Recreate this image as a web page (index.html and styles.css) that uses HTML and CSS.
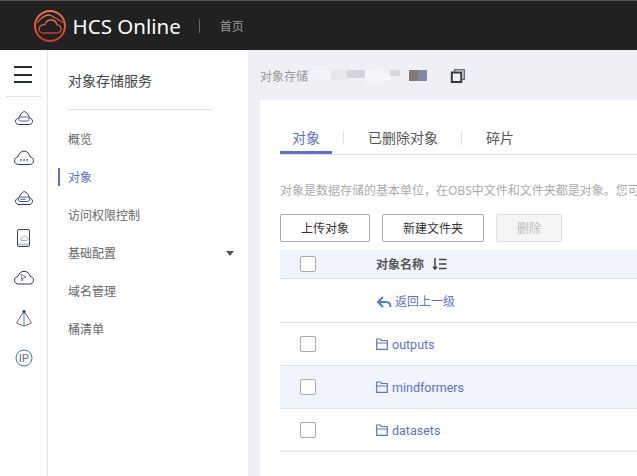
FILE: index.html
```html
<!DOCTYPE html>
<html lang="zh-CN">
<head>
    <meta charset="UTF-8" />
    <title>HCS Online</title>
    <link rel="stylesheet" href="styles.css">
</head>
<body>
    <header class="topbar">
        <svg class="logo" width="32" height="32" viewBox="0 0 32 32" fill="none" stroke="url(#logoFade)" stroke-width="1.300">
            <defs><linearGradient id="logoFade" x1="0" y1="0" x2="0" y2="1"><stop offset="0" stop-color="#e8784a" /><stop offset="1" stop-color="#d23a2a" /></linearGradient></defs>
            <circle cx="16" cy="16" r="15" stroke-width="2" />
            <path d="M9 23h13.500c2.800 0 4.500-1.800 4.500-4 0-2.300-1.700-4-4-4.200C22.300 12 19.800 10 17 10c-3 0-5.300 2-6 4.700C7.500 14.500 5 16.500 5 19c0 2.300 1.800 4 4 4z" />
            <path d="M3 13C7 8 12 3.500 17 5.500L30 13" />
        </svg>
        <span class="brand">HCS Online</span>
        <span class="topbar-sep"></span>
        <span class="home">首页</span>
    </header>
    <div class="layout">
        <nav class="rail">
            <div class="burger"><i></i><i></i><i></i></div>
            <ul class="rail-icons">
                <li><svg width="20" height="20" viewBox="0 0 20 20" fill="none" stroke="#2c3550"><path d="M5 16.500h10c2.200 0 3.500-1.400 3.500-3.200 0-1.700-1.200-3-2.900-3.200C15 8 13 3.700 10.300 3.700 7.800 3.700 5.800 7.800 5 10 3 10.200 1.500 11.500 1.500 13.300c0 1.800 1.500 3.200 3.500 3.200z" /><rect x="5" y="9" width="10" height="4" rx="1.500" stroke="#4a6aa8" /></svg></li>
                <li><svg width="22" height="20" viewBox="0 0 22 20" fill="none" stroke="#2c3550"><path d="M5.500 16.500h11c2.500 0 4-1.700 4-3.800 0-2-1.500-3.600-3.400-3.800C16.500 6 14.300 3 11 3 8 3 5.800 5.800 5 8.800 3 9.200 1.500 10.800 1.500 12.800c0 2 1.700 3.700 4 3.700z" /><path d="M7 12h1.500M10.300 12h1.500M13.500 12H15" stroke="#3d4a6b" stroke-width="1.500" /></svg></li>
                <li><svg width="20" height="20" viewBox="0 0 20 20" fill="none" stroke="#2c3550"><path d="M5 16.500h10c2.200 0 3.500-1.400 3.500-3.200 0-1.700-1.200-3-2.900-3.200C15 8 13 3.700 10.300 3.700 7.800 3.700 5.800 7.800 5 10 3 10.200 1.500 11.500 1.500 13.300c0 1.800 1.500 3.200 3.500 3.200z" /><rect x="4.500" y="9" width="11" height="4.500" rx="1.500" stroke="#4a6aa8" /><path d="M6.500 11.200h5" stroke="#3d4a6b" /></svg></li>
                <li><svg width="20" height="20" viewBox="0 0 20 20" fill="none"><rect x="3.500" y="1.500" width="12" height="17" rx="1.500" stroke="#3e4660" /><path d="M7.500 12.500h5c1 0 1.500-.7 1.500-1.400s-.6-1.300-1.300-1.400c-.3-1-1.200-1.700-2.200-1.700s-2 .7-2.300 1.700c-.8.100-1.400.7-1.400 1.400s.5 1.400 1.200 1.400z" stroke="#a5adbd" /><path d="M4 16.500h11" stroke="#bfc2c9" stroke-width="2" /></svg></li>
                <li><svg width="22" height="20" viewBox="0 0 22 20" fill="none" stroke="#2c3550"><path d="M5.500 16h11c2.500 0 4-1.700 4-3.800 0-2-1.500-3.600-3.400-3.800C16.500 5.500 14.300 3.300 11 3.300 8 3.300 5.800 5.300 5 8.300 3 8.700 1.500 10.300 1.500 12.300c0 2 1.700 3.700 4 3.700z" /><path d="M8 6l5 3-3 1-1 3z" stroke="#6a7488" stroke-width=".9" /></svg></li>
                <li><svg width="20" height="20" viewBox="0 0 20 20" fill="none"><path d="M10 3L2.500 15l7.500 3 7.500-3z" stroke="#7a6a68" /><path d="M10 3v15" stroke="#4a80c8" /><circle cx="10" cy="3.500" r="1.500" fill="#2c3550" /></svg></li>
                <li><svg width="20" height="20" viewBox="0 0 20 20" fill="none"><circle cx="10" cy="10" r="8" stroke="#4a70b8" /><text class="ip" x="10" y="14" text-anchor="middle">IP</text></svg></li>
            </ul>
        </nav>
        <aside class="side">
            <h2 class="side-title">对象存储服务</h2>
            <ul class="side-menu">
                <li>概览</li>
                <li class="active">对象</li>
                <li>访问权限控制</li>
                <li class="has-sub">基础配置</li>
                <li>域名管理</li>
                <li>桶清单</li>
            </ul>
        </aside>
        <main class="main">
            <div class="crumb">
                <span>对象存储</span>
                <svg class="mask" width="120" height="16" viewBox="0 0 120 16"><defs><filter id="soft"><feGaussianBlur stdDeviation=".7" /></filter></defs><g filter="url(#soft)"><rect x="4" y="2" width="26" height="9" fill="#f3f4f8" /><rect x="22" y="2" width="16" height="10" fill="#e6e8ec" /><rect x="38" y="2" width="18" height="8" fill="#d3d4dc" /><rect x="56" y="2" width="17" height="13" fill="#f4f5f8" /><rect x="73" y="5" width="8" height="7" fill="#f6f7fa" /><rect x="81" y="2" width="10" height="6" fill="#d8d9de" /><rect x="100" y="2" width="9" height="11" fill="#85777c" /><rect x="109" y="2" width="9" height="11" fill="#7f8ba6" /></g></svg>
                <svg class="copy" width="16" height="16" viewBox="0 0 16 16" fill="none" stroke-width="1.500"><path d="M4.500 4V1.800h9.800v9.400H12" stroke="#5f7690" /><rect x="1.800" y="4.500" width="9.500" height="9.500" stroke="#3a3a3a" stroke-width="2" /></svg>
            </div>
            <section class="card">
                <div class="tabs">
                    <span class="tab current">对象</span>
                    <span class="tab">已删除对象</span>
                    <span class="tab">碎片</span>
                </div>
                <p class="desc">对象是数据存储的基本单位，在OBS中文件和文件夹都是对象。您可</p>
                <div class="actions">
                    <button class="btn btn-upload">上传对象</button>
                    <button class="btn btn-new">新建文件夹</button>
                    <button class="btn btn-del">删除</button>
                </div>
                <div class="table">
                    <div class="row head">
                        <span class="check"></span>
                        <span class="name">对象名称
                            <svg class="sort" width="15" height="14" viewBox="0 0 15 14" fill="none" stroke="#444" stroke-width="1.500"><path d="M3 1v11M1 9.800l2 2.400 2-2.400M7 2.500h7.500M7 7h7.500M7 11.500h7.500" /></svg>
                        </span>
                    </div>
                    <div class="row back">
                        <span class="check-gap"></span>
                        <a class="name link">
                            <svg class="back-arrow" width="16" height="14" viewBox="0 0 16 14" fill="none" stroke="#4a80c8" stroke-width="2"><path d="M7 2L2 7l5 5M2 7h8c2.500 0 4.500 1.300 4.500 5" /></svg>
                            <span class="cjk">返回上一级</span>
                        </a>
                    </div>
                    <div class="row">
                        <span class="check"></span>
                        <a class="name link">
                            <svg class="folder" width="12" height="12" viewBox="0 0 12 12" fill="none"><path d="M.7 11.300V1h3.800l1 1.500h5.800v8.800zM.7 5h10.600" /></svg>
                            outputs
                        </a>
                    </div>
                    <div class="row shaded">
                        <span class="check"></span>
                        <a class="name link">
                            <svg class="folder" width="12" height="12" viewBox="0 0 12 12" fill="none"><path d="M.7 11.300V1h3.800l1 1.500h5.800v8.800zM.7 5h10.600" /></svg>
                            mindformers
                        </a>
                    </div>
                    <div class="row">
                        <span class="check"></span>
                        <a class="name link">
                            <svg class="folder" width="12" height="12" viewBox="0 0 12 12" fill="none"><path d="M.7 11.300V1h3.800l1 1.500h5.800v8.800zM.7 5h10.600" /></svg>
                            datasets
                        </a>
                    </div>
                </div>
            </section>
        </main>
    </div>
</body>
</html>
```

FILE: styles.css
```css
*{
    box-sizing: border-box;
}
html,body{
    margin: 0;
    height: 100%;
    overflow: hidden;
}
body{
    font-family: "Noto Sans", "Noto Sans CJK SC", sans-serif;
    font-size: 12px;
    color: #555;
    background: #eff0f5;
}
ul{
    margin: 0;
    padding: 0;
    list-style: none;
}
svg{
    display: block;
    flex: none;
}
.topbar{
    height: 50px;
    background: #212121;
    border-top: 1px solid #555;
    display: flex;
    align-items: center;
    padding-left: 34px;
}
.brand{
    margin-left: 6.5px;
    font-size: 20.5px;
    color: #fff;
    white-space: nowrap;
}
.topbar-sep{
    width: 1px;
    height: 14px;
    background: #666;
    margin: 0 20px 0 18px;
}
.home{
    color: #999;
    font-size: 12px;
}
.layout{
    display: flex;
    height: 426px;
}
.rail{
    width: 48px;
    background: #fff;
    border-right: 1px solid #e3e3e6;
    flex: none;
}
.burger{
    margin: 16px 6px 0;
    height: 31px;
    border-bottom: 1px solid #dfe1e6;
    padding: 0 8px;
}
.burger i{
    display: block;
    width: 18px;
    height: 2px;
    margin-bottom: 5.5px;
    background: #252b3a;
}
.rail-icons{
    display: flex;
    flex-direction: column;
    align-items: center;
    gap: 20px;
    padding-top: 11px;
}
.rail-icons svg{
    height: 20px;
}
.ip{
    font-size: 11px;
    fill: #5a6a9a;
    font-family: "Liberation Sans", sans-serif;
}
.side{
    width: 200px;
    background: #fff;
    flex: none;
}
.side-title{
    margin: 0 36px 0 20px;
    padding: 21px 0 18px;
    height: 60px;
    border-bottom: 1px solid #dfe1e6;
    font-size: 14px;
    line-height: 20px;
    font-weight: 400;
    color: #444;
}
.side-menu{
    padding-top: 11px;
}
.side-menu li{
    position: relative;
    height: 38px;
    line-height: 38px;
    padding-left: 20px;
    color: #666;
}
.side-menu .active{
    color: #5e6fd0;
}
.side-menu .active::before{
    content: "";
    position: absolute;
    left: 10px;
    top: 9px;
    width: 2px;
    height: 18px;
    background: #5e6fd0;
}
.side-menu .has-sub::after{
    content: "";
    position: absolute;
    right: 14px;
    top: 16px;
    border: 4px solid transparent;
    border-top: 5px solid #555;
    border-bottom: 0;
}
.main{
    flex: 1;
    min-width: 0;
    padding-left: 12px;
}
.crumb{
    height: 50px;
    padding-top: 2px;
    display: flex;
    align-items: center;
    color: #999;
    white-space: nowrap;
}
.mask{
    margin-left: 1px;
}
.copy{
    margin-left: 21px;
}
.card{
    height: 376px;
    background: #fff;
    padding: 27px 0 0 20px;
    overflow: hidden;
}
.tabs{
    display: flex;
    height: 28px;
    border-bottom: 1px solid #dfe1e6;
}
.tab{
    position: relative;
    padding: 0 24px;
    font-size: 14px;
    line-height: 22px;
    color: #555;
}
.tab:not(:last-child)::after{
    content: "";
    position: absolute;
    right: 0;
    top: 4px;
    width: 1px;
    height: 14px;
    background: #dfe1e6;
}
.tab.current{
    color: #5e6fd0;
    padding-left: 12px;
}
.tab.current::before{
    content: "";
    position: absolute;
    left: 0;
    bottom: 0;
    width: 52px;
    height: 3px;
    background: #5e6fd0;
}
.desc{
    margin: 27px 0 0;
    line-height: 18px;
    color: #aaa;
    white-space: nowrap;
}
.actions{
    display: flex;
    gap: 12px;
    margin-top: 14px;
}
.btn{
    height: 28px;
    padding: 0;
    font: inherit;
    color: #333;
    background: #fff;
    border: 1px solid #a8a8b0;
    border-radius: 2px;
}
.btn-upload{
    width: 90px;
}
.btn-new{
    width: 102px;
}
.btn-del{
    width: 66px;
    color: #bbb;
    background: #f5f5f5;
    border-color: #e0e0e0;
}
.table{
    margin-top: 8px;
}
.row{
    display: flex;
    align-items: center;
    height: 43px;
    border-bottom: 1px solid #dfe1e6;
}
.head{
    height: 29px;
    background: #f0f4fc;
}
.back{
    height: 44px;
}
.shaded{
    background: #f0f4fc;
}
.check,.check-gap{
    flex: none;
    width: 16px;
    height: 16px;
    margin: 0 60px 0 20px;
}
.check{
    background: #fff;
    border: 1px solid #aaa;
    border-radius: 2px;
}
.name{
    display: flex;
    align-items: center;
    gap: 4px;
}
.head .name{
    font-weight: 700;
    color: #555;
}
.sort{
    margin-left: 4px;
}
.link{
    color: #5e6fd0;
    font-family: Roboto, "Noto Sans CJK SC", sans-serif;
    font-size: 12.5px;
}
.cjk{
    font-size: 12px;
}
.back-arrow{
    margin: 3px -1px 0 0;
}
.folder{
    stroke: #5e6fd0;
    stroke-width: 1.2;
}
```
